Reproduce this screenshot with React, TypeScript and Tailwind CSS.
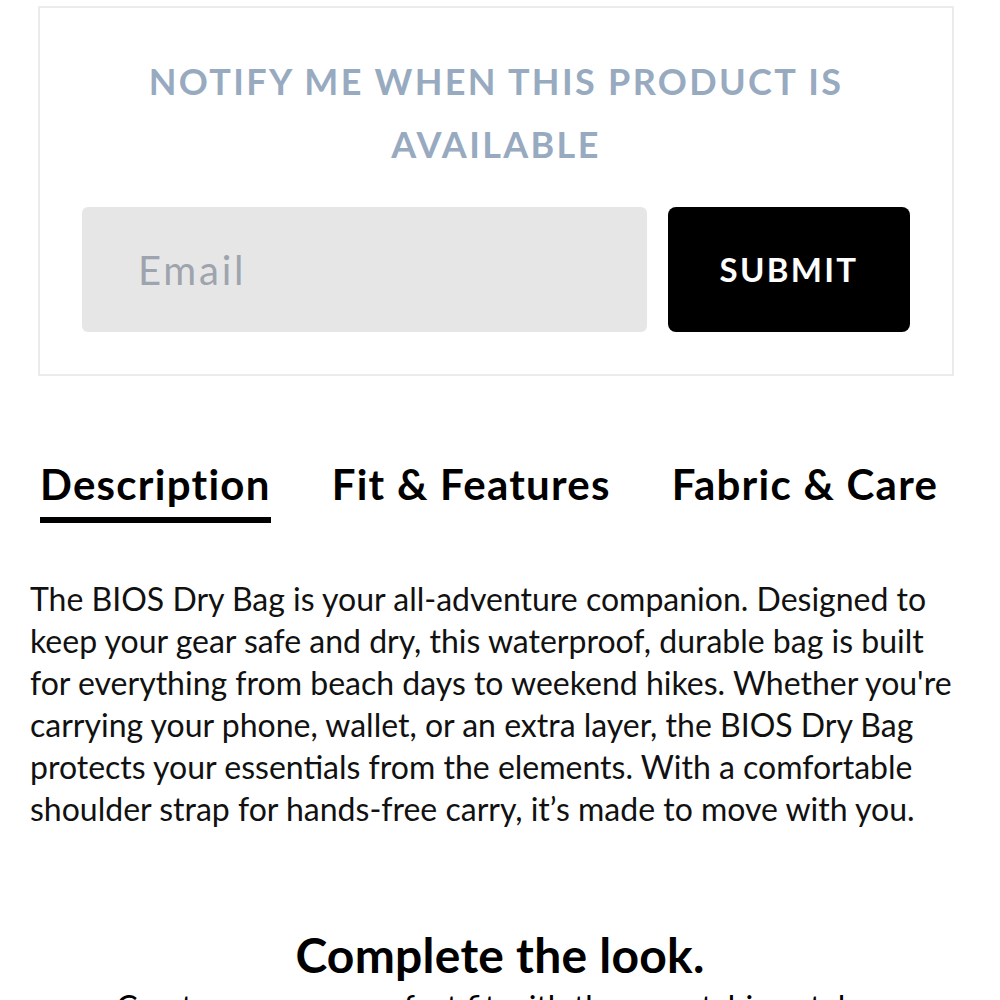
import { useState } from "react";

const tabs = ["Description", "Fit & Features", "Fabric & Care"];

export default function App() {
  const [active, setActive] = useState(0);

  return (
    <div className="bg-white w-[1000px] h-[1000px] overflow-hidden px-[30px] pt-[6px] font-['Lato',sans-serif] text-black">
      <section className="ml-[8px] w-[916px] h-[370px] border-2 border-[#ebebeb] flex flex-col items-center">
        <h2 className="mt-[42px] w-[800px] text-center text-[36px] leading-[63px] font-bold tracking-[0.065em] text-[#97aac0]">
          NOTIFY ME WHEN THIS PRODUCT IS AVAILABLE
        </h2>
        <form className="mt-[31px] flex gap-[21px] w-[828px]" onSubmit={(e) => e.preventDefault()}>
          <input
            type="email"
            placeholder="Email"
            className="w-[565px] h-[125px] rounded-[6px] bg-[#e6e6e6] pl-[56px] text-[40px] tracking-[0.07em] placeholder:text-[#9ea4ae] outline-none"
          />
          <button className="w-[242px] h-[125px] rounded-[8px] bg-black text-white text-[33px] font-bold tracking-[0.07em]">
            SUBMIT
          </button>
        </form>
      </section>

      <nav className="mt-[83px] flex gap-[61px] pl-[10px]">
        {tabs.map((t, i) => (
          <button key={t} onClick={() => setActive(i)} className="flex flex-col items-start">
            <span className="text-[42px] leading-[50px] font-bold tracking-[0.03em]">{t}</span>
            <span className={`mt-[8px] h-[6px] w-full ${i === active ? "bg-black" : "bg-transparent"}`} />
          </button>
        ))}
      </nav>

      <p className="mt-[55px] w-[935px] text-[32px] leading-[42px] text-[#111]">
        The BIOS Dry Bag is your all-adventure companion. Designed to keep your gear safe and dry, this waterproof, durable bag is built for everything from beach days to weekend hikes. Whether you're carrying your phone, wallet, or an extra layer, the BIOS Dry Bag protects your essentials from the elements. With a comfortable shoulder strap for hands-free carry, it’s made to move with you.
      </p>

      <div className="mt-[97px] flex flex-col items-center">
        <h3 className="text-[48px] leading-[56px] font-bold tracking-[0.005em]">Complete the look.</h3>
        <p className="mt-[4px] text-[32px] leading-[40px]">Create your own perfect fit with these matching styles.</p>
      </div>
    </div>
  );
}
